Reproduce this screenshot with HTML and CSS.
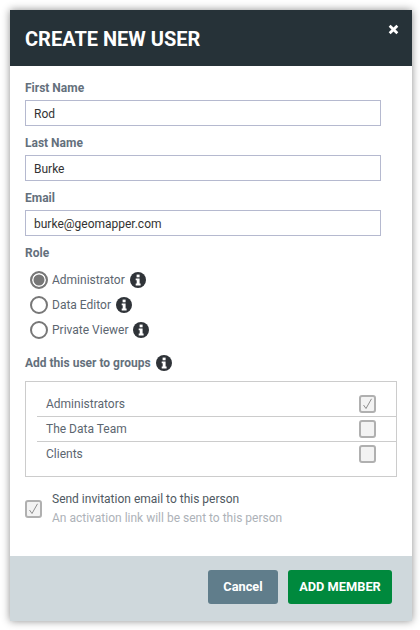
FILE: index.html
```html
<!DOCTYPE html>
<html lang="en">
<head>
    <meta charset="UTF-8">
    <meta name="viewport" content="width=device-width, initial-scale=1.0">
    <title>Create New User</title>
    <link rel="stylesheet" href="styles.css">
</head>
<body>
    <svg class="icon-defs" width="0" height="0">
        <symbol id="info" viewBox="0 0 16 16">
            <circle cx="8" cy="8" r="8" fill="#2f3338"/>
            <rect x="6.6" y="2.6" width="3" height="2.7" fill="#fff"/>
            <path d="M5.7 6.4h3.9v5.2h1v1.8H5.7v-1.8h1V8.2h-1z" fill="#fff"/>
        </symbol>
    </svg>

    <div class="modal">
        <div class="modal-header">
            <h1>CREATE NEW USER</h1>
            <svg class="close" width="11" height="11" viewBox="0 0 11 11">
                <path d="M2.6.8 5.5 3.5 8.4.8l1.9 1.9-2.8 2.8 2.8 2.8-1.9 1.9-2.9-2.8-2.9 2.8-1.9-1.9 2.8-2.8L.7 2.7z" fill="#fff"/>
            </svg>
        </div>

        <div class="modal-body">
            <label class="field-label" for="firstName">First Name</label>
            <input class="text-input" id="firstName" type="text" value="Rod">

            <label class="field-label" for="lastName">Last Name</label>
            <input class="text-input" id="lastName" type="text" value="Burke">

            <label class="field-label" for="email">Email</label>
            <input class="text-input" id="email" type="text" value="burke@geomapper.com">

            <div class="field-label">Role</div>
            <div class="role-list">
                <div class="role"><span class="radio selected"></span>Administrator<svg class="info"><use href="#info"/></svg></div>
                <div class="role"><span class="radio"></span>Data Editor<svg class="info"><use href="#info"/></svg></div>
                <div class="role"><span class="radio"></span>Private Viewer<svg class="info"><use href="#info"/></svg></div>
            </div>

            <div class="field-label groups-label">Add this user to groups<svg class="info"><use href="#info"/></svg></div>
            <div class="group-box">
                <div class="group-row">Administrators
                    <span class="checkbox"><svg width="11" height="12" viewBox="0 0 11 12"><path d="M1.5 7 4 10.5 9.5.8" fill="none" stroke="#8d8d8d" stroke-width="1"/></svg></span>
                </div>
                <div class="group-row">The Data Team<span class="checkbox"></span></div>
                <div class="group-row">Clients<span class="checkbox"></span></div>
            </div>

            <div class="invite">
                <span class="checkbox"><svg width="11" height="12" viewBox="0 0 11 12"><path d="M1.5 7 4 10.5 9.5.8" fill="none" stroke="#8d8d8d" stroke-width="1"/></svg></span>
                <div>
                    <div class="invite-title">Send invitation email to this person</div>
                    <div class="invite-note">An activation link will be sent to this person</div>
                </div>
            </div>
        </div>

        <div class="modal-footer">
            <button class="btn btn-cancel">Cancel</button>
            <button class="btn btn-add">ADD MEMBER</button>
        </div>
    </div>
</body>
</html>
```

FILE: styles.css
```css
* {
    margin: 0;
    padding: 0;
    box-sizing: border-box;
}

body {
    font-family: Roboto, sans-serif;
    background: #fff;
    padding: 10px 8px 9px 10px;
    height: 630px;
    overflow: hidden;
}

.icon-defs {
    display: block;
    height: 0;
}

.modal {
    width: 402px;
    height: 611px;
    background: #fff;
    display: flex;
    flex-direction: column;
    box-shadow: 0 0 8px rgba(0, 0, 0, 0.45);
}

.modal-header {
    height: 56px;
    background: #263238;
    padding: 0 13px 0 15px;
    display: flex;
    justify-content: space-between;
    flex-shrink: 0;
}

h1 {
    font-size: 20px;
    line-height: 24px;
    font-weight: 700;
    color: #fff;
    margin-top: 17px;
}

.close {
    margin-top: 14px;
}

.modal-body {
    flex: 1;
    padding: 14px 15px 0;
}

.field-label {
    display: block;
    font-size: 12px;
    line-height: 16px;
    font-weight: 700;
    color: #64707c;
    margin-bottom: 4px;
}

.text-input {
    display: block;
    width: 356px;
    height: 26px;
    border: 1px solid #b5b9cf;
    padding: 2px 8px 0;
    font-family: Roboto, sans-serif;
    font-size: 12px;
    color: #333;
    margin-bottom: 9px;
    outline: none;
}

.role-list {
    padding-left: 5px;
    margin-top: 6px;
}

.role {
    display: flex;
    align-items: center;
    height: 25px;
    font-size: 12px;
    color: #5c6670;
}

.radio {
    width: 18px;
    height: 18px;
    border: 2px solid #777;
    border-radius: 50%;
    margin-right: 4px;
    background: #fff;
    flex-shrink: 0;
}

.radio.selected {
    background: #777;
    box-shadow: inset 0 0 0 1.5px #fff;
}

.info {
    width: 16px;
    height: 16px;
    margin-left: 5px;
}

.groups-label {
    display: flex;
    align-items: center;
    margin-top: 13px;
    margin-bottom: 10px;
}

.group-box {
    width: 372px;
    height: 96px;
    border: 1px solid #ccc;
    padding: 10px 0 0 11px;
}

.group-row {
    display: flex;
    justify-content: space-between;
    align-items: center;
    height: 25px;
    padding: 0 20px 1px 9px;
    font-size: 12px;
    color: #5c6670;
    border-bottom: 1px solid #ccc;
}

.group-row:last-child {
    border-bottom: none;
}

.checkbox {
    width: 17px;
    height: 18px;
    border: 2px solid #b0b0b0;
    border-radius: 3px;
    background: #f3f3f3;
    display: flex;
    align-items: center;
    justify-content: center;
    flex-shrink: 0;
}

.invite {
    display: flex;
    align-items: center;
    gap: 10px;
    margin-top: 13px;
}

.invite-title {
    font-size: 12px;
    line-height: 19px;
    color: #4f5962;
}

.invite-note {
    font-size: 12px;
    line-height: 19px;
    color: #adb2b8;
}

.modal-footer {
    height: 65px;
    background: #cfd8dc;
    display: flex;
    justify-content: flex-end;
    gap: 10px;
    padding: 14px 20px 0 0;
    flex-shrink: 0;
}

.btn {
    height: 34px;
    border: none;
    border-radius: 3px;
    padding-bottom: 2px;
    font-family: Roboto, sans-serif;
    font-size: 12.8px;
    font-weight: 700;
    color: #fff;
}

.btn-cancel {
    width: 70px;
    background: #607d8b;
}

.btn-add {
    width: 104px;
    background: #00893d;
}
```
